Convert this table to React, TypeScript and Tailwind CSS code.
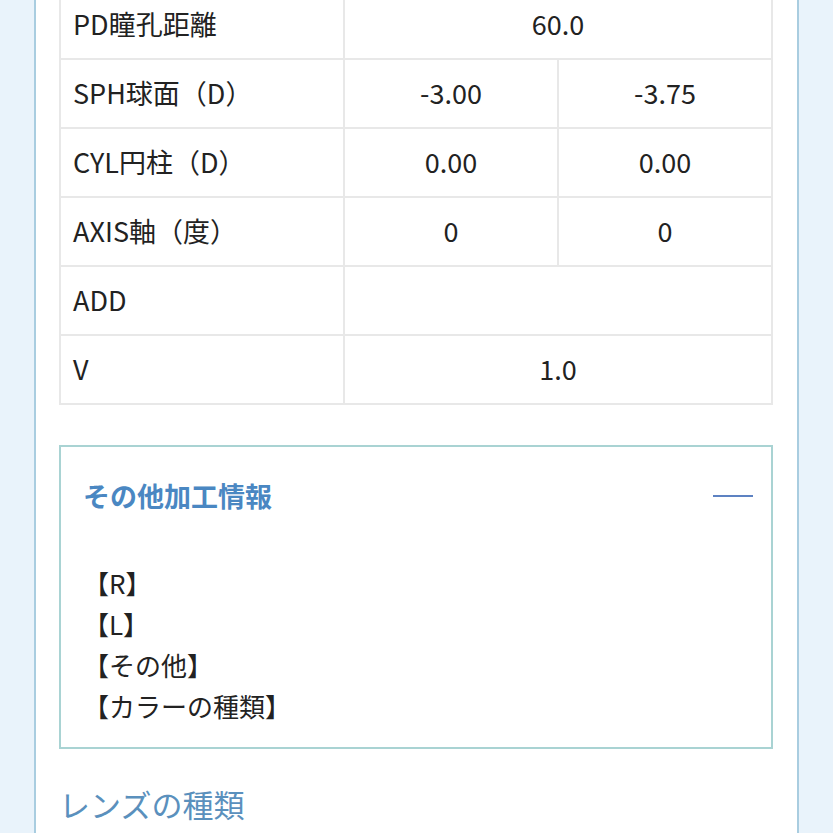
import React from "react";

const font = { fontFamily: '"Noto Sans CJK JP", "Noto Sans", sans-serif' };

type Row = { label: string; values: string[] };

const rows: Row[] = [
  { label: "PD瞳孔距離", values: ["60.0"] },
  { label: "SPH球面（D）", values: ["-3.00", "-3.75"] },
  { label: "CYL円柱（D）", values: ["0.00", "0.00"] },
  { label: "AXIS軸（度）", values: ["0", "0"] },
  { label: "ADD", values: [""] },
  { label: "V", values: ["1.0"] },
];

export default function App() {
  return (
    <div
      className="w-[833px] h-[833px] overflow-hidden flex bg-[#e9f3fb] text-[#222]"
      style={font}
    >
      <div className="w-[34px] shrink-0" />
      <div className="w-[765px] shrink-0 bg-white border-x-2 border-[#a9cde0] pl-[23px] pr-[24px]">
        <div className="mt-[-11px] grid grid-cols-[282px_1fr_1fr] gap-[2px] bg-[#e8e8e8] p-[2px]">
          {rows.map((r) => (
            <React.Fragment key={r.label}>
              <div className="bg-white h-[67px] flex items-center pl-[12px] text-[27px]">
                {r.label}
              </div>
              {r.values.length === 1 ? (
                <div className="col-span-2 bg-white h-[67px] flex items-center justify-center text-[27px]">
                  {r.values[0]}
                </div>
              ) : (
                r.values.map((v, i) => (
                  <div
                    key={i}
                    className="bg-white h-[67px] flex items-center justify-center text-[27px]"
                  >
                    {v}
                  </div>
                ))
              )}
            </React.Fragment>
          ))}
        </div>

        <div className="mt-[40px] border-2 border-[#a9d3d3] h-[304px] pl-[22px] pr-[18px] pt-[31px]">
          <div className="flex items-center justify-between h-[36px]">
            <span className="text-[27px] font-bold text-[#4a87c2] leading-[36px]">
              その他加工情報
            </span>
            <span className="block w-[40px] h-[2px] bg-[#5d82c2]" />
          </div>
          <div className="mt-[48px] text-[26px] leading-[41px]">
            <div>【R】</div>
            <div>【L】</div>
            <div>【その他】</div>
            <div>【カラーの種類】</div>
          </div>
        </div>

        <div className="mt-[35px] text-[31px] leading-[40px] text-[#5a90bd]">
          レンズの種類
        </div>
      </div>
      <div className="flex-1" />
    </div>
  );
}
